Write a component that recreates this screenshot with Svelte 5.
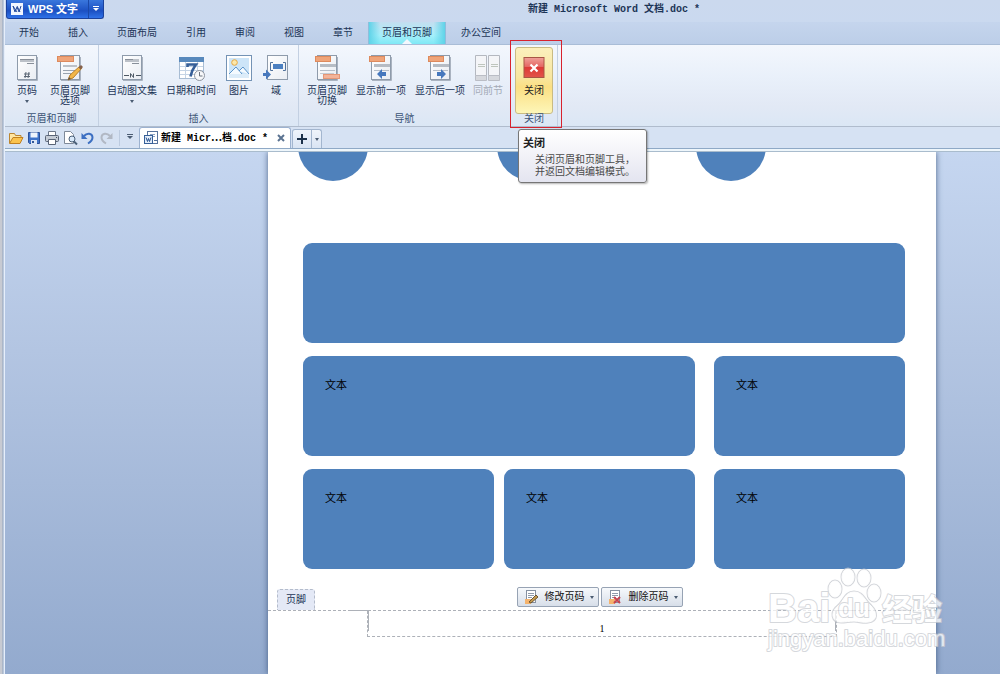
<script>
  const menuTabs = ['开始', '插入', '页面布局', '引用', '审阅', '视图', '章节', '页眉和页脚', '办公空间'];
  let activeTab = $state('页眉和页脚');

  const groups = [
    {
      title: '页眉和页脚',
      items: [
        { icon: 'number', lines: ['页码'], arrow: true },
        { icon: 'options', lines: ['页眉页脚', '选项'] }
      ]
    },
    {
      title: '插入',
      items: [
        { icon: 'autotext', lines: ['自动图文集'], arrow: true },
        { icon: 'date', lines: ['日期和时间'] },
        { icon: 'picture', lines: ['图片'] },
        { icon: 'field', lines: ['域'] }
      ]
    },
    {
      title: '导航',
      items: [
        { icon: 'switch', lines: ['页眉页脚', '切换'] },
        { icon: 'prev', lines: ['显示前一项'] },
        { icon: 'next', lines: ['显示后一项'] },
        { icon: 'same', lines: ['同前节'], disabled: true }
      ]
    },
    {
      title: '关闭',
      highlight: true,
      items: [{ icon: 'close', lines: ['关闭'] }]
    }
  ];

  const quickActions = [
    { id: 'open', label: '打开' },
    { id: 'save', label: '保存' },
    { id: 'print', label: '打印' },
    { id: 'preview', label: '打印预览' },
    { id: 'undo', label: '撤消' },
    { id: 'redo', label: '恢复' }
  ];
</script>

{#snippet sheet()}
  <rect x="4.5" y="1.5" width="19" height="24" fill="url(#paper)" stroke="#8e9bab" />
  <path d="M5 26.5h19.5V3" fill="none" stroke="#aab3c0" />
{/snippet}

{#snippet ribbonIcon(name)}
  <svg class="ribbon-icon" viewBox="0 0 28 28" aria-hidden="true">
    {#if name === 'number'}
      {@render sheet()}
      <path d="M7 5h14v3H7z" fill="#bcc1c8" />
      <path d="M7 5.500h14M14 9.500h7" stroke="#888f99" />
      <path d="M13 18l-1 6M16 18l-1 6M11 20h6M11 22.500h6" stroke="#5d6876" fill="none" />
    {:else if name === 'autotext'}
      {@render sheet()}
      <path d="M7 5h14v3H7z" fill="#bcc1c8" />
      <path d="M7 5.500h8M14 9.500h7" stroke="#888f99" />
      <path d="M6 21.500h5M18 21.500h5M12.500 23.500v-4l3 4v-4" stroke="#4d5864" fill="none" />
    {:else if name === 'date'}
      <rect x="2.500" y="3.500" width="24" height="21" fill="#fff" stroke="#a8bdd4" />
      <path d="M2 3h25v5H2z" fill="#5889bc" />
      <path d="M3 12.500h23M3 16.500h23M3 20.500h23M8.500 8v16M20.500 8v16" stroke="#c5d4e5" />
      <path d="M10.500 13v-2.500h8.500c-2.500 3.500-4.500 6-5.500 12" fill="none" stroke="#365f98" stroke-width="2.600" />
      <circle cx="22.500" cy="21.500" r="5" fill="#f7f8fa" stroke="#8c939e" />
      <path d="M22.500 18v4h3" fill="none" stroke="#6c7480" />
    {:else if name === 'picture'}
      <rect x="1.500" y="1.500" width="25" height="25" fill="#fff" stroke="#7493b5" />
      <rect x="4" y="4" width="20" height="20" fill="#cde5f8" />
      <circle cx="9.500" cy="8.500" r="2.800" fill="#fce7aa" stroke="#e5a845" />
      <path d="M4 20l7-7 6 7" fill="#f4faff" stroke="#5c94ca" />
      <path d="M14 17l4-4 6 7" fill="#f4faff" stroke="#5c94ca" />
      <path d="M4 20h20v4H4z" fill="#dcecf9" />
    {:else if name === 'field'}
      <rect x="5.500" y="1.500" width="20" height="24" fill="url(#paper)" stroke="#8e9bab" />
      <path d="M11 10h10v5H11z" fill="#4b7fc0" />
      <path d="M11 8.500H8.500v8H11M21 8.500h2.500v8H21" fill="none" stroke="#53739c" />
      <path d="M1 19h3v-3.500l5 5-5 5V22H1z" fill="#4778bd" />
    {:else if name === 'options'}
      {@render sheet()}
      <path d="M7 11h14v2H7z" fill="#bcc1c8" />
      <path d="M7 16.500h12M7 19.500h8" stroke="#9aa4b0" />
      <rect x="1.500" y="2.500" width="16" height="5" fill="#efa479" stroke="#dd8a5d" />
      <path d="M12 26l2-5L24 12l2 2-9 10z" fill="#f1b649" stroke="#ba7f27" />
      <path d="M12 26l1-3 2 2z" fill="#5c5148" />
      <path d="M22.500 13.500L25 11l2 2-2.500 2.500z" fill="#84614c" />
    {:else if name === 'same'}
      <path d="M1.500 1.500h11v20h-11zM14.500 1.500h11v20h-11z" fill="#f4f5f8" stroke="#b4b8c0" />
      <path d="M4 10.500h7M4 12.500h7M17 10.500h7M17 12.500h7" stroke="#bec5bd" />
      <path d="M1.500 21.500h11v5h-11zM14.500 21.500h11v5h-11z" fill="#d6d8dd" stroke="#babdc5" />
    {:else if name === 'close'}
      <rect x="4" y="3.500" width="20" height="20" fill="url(#closeRed)" stroke="#a85645" />
      <path d="M4.500 4h19v9h-19z" fill="#fff" opacity=".2" />
      <path d="M10.500 10.500l7 7M17.500 10.500l-7 7" stroke="#fff" stroke-width="2.200" />
    {:else}
      {@render sheet()}
      <path d="M7 10h16v3H7z" fill="#b6bcc4" />
      <path d="M7 16.500h15" stroke="#b6bec9" />
      <rect x="2.500" y="2.500" width="15" height="5" fill="#efa479" stroke="#dd8a5d" />
      {#if name === 'switch'}
        <path d="M7 19.500h14" stroke="#c5cbd3" />
        <rect x="10.500" y="20.500" width="16" height="4" fill="#f3b49a" stroke="#e59777" />
      {:else if name === 'prev'}
        <path d="M10 20l5-5v3h4v4h-4v3z" fill="#4678bd" />
      {:else}
        <path d="M20 20l-5-5v3h-4v4h4v3z" fill="#4678bd" />
      {/if}
    {/if}
  </svg>
{/snippet}

{#snippet quickIcon(name)}
  <svg class="quick-icon" viewBox="0 0 16 16" aria-hidden="true">
    {#if name === 'open'}
      <path d="M1.500 13V3.500h5l1 2H13V8" fill="#ffe6a2" stroke="#bb8632" />
      <path d="M1.500 13.500L5 7.500h10l-3 6z" fill="#fbc34d" stroke="#c08122" />
    {:else if name === 'save'}
      <path d="M2.500 2.500h11v11h-10l-1-1z" fill="#3e73c9" stroke="#2b5099" />
      <path d="M4.500 2.500h7v5h-7z" fill="#eef4fc" />
      <path d="M5 10h6v4H5z" fill="#dbe6f6" />
      <path d="M6 11h2v2H6z" fill="#315697" />
    {:else if name === 'print'}
      <path d="M4.500 6V1.500h7V6" fill="#fff" stroke="#6d788a" />
      <rect x="1.500" y="5.500" width="13" height="6" rx="1" fill="#c4cbd5" stroke="#596476" />
      <path d="M4.500 9.500h7v5h-7z" fill="#fff" stroke="#596476" />
      <path d="M12 7.500h1" stroke="#3e4a5c" />
    {:else if name === 'preview'}
      <path d="M2.500 1.500h6l3 3v9h-9z" fill="#fff" stroke="#7e8999" />
      <circle cx="10" cy="9" r="3" fill="#d8e9fa" stroke="#4b6078" />
      <path d="M12 11.500l3 3" stroke="#4b6078" stroke-width="2" />
    {:else if name === 'undo'}
      <path d="M4 6c3-3.500 8-3 8.500 1 .2 3-2 5-4.500 6.500" fill="none" stroke="#3c6fc2" stroke-width="2" />
      <path d="M1.500 3v6h6z" fill="#3c6fc2" />
    {:else if name === 'redo'}
      <path d="M12 6C9 2.500 4 3 3.500 7c-.2 3 2 5 4.500 6.500" fill="none" stroke="#b1b8c4" stroke-width="2" />
      <path d="M14.500 3v6h-6z" fill="#b1b8c4" />
    {:else}
      <rect x="4.500" y="1.500" width="10" height="12" fill="#fff" stroke="#57729c" />
      <path d="M7 4.500h5M7 6.500h5" stroke="#8ba1c0" />
      <rect x="1.500" y="5.500" width="8" height="8" fill="#e3edfa" stroke="#365f98" />
      <path d="M3 7.500l1.500 4 1-3 1 3 1.500-4" fill="none" stroke="#28528f" />
      <path d="M11 10.500h3" stroke="#57729c" />
    {/if}
  </svg>
{/snippet}

{#snippet pageIcon(kind)}
  <svg class="page-icon" viewBox="0 0 16 16" aria-hidden="true">
    <rect x="3.500" y="1.500" width="9" height="12" fill="#fff" stroke="#8691a1" />
    <path d="M5 4.500h6M5 6.500h6M5 8.500h4" stroke="#8f9aaa" />
    <path d="M2 10h6v5H2z" fill="#f4b36d" />
    {#if kind === 'edit'}
      <path d="M6 13l7-7 2 2-7 6z" fill="#c4994d" stroke="#6c5634" />
    {:else}
      <path d="M7 8l6 6M13 8l-6 6" stroke="#c44351" stroke-width="2" />
    {/if}
  </svg>
{/snippet}

{#snippet paw()}
  <ellipse cx="72" cy="22" rx="6" ry="8" />
  <ellipse cx="85" cy="10" rx="6" ry="8" />
  <ellipse cx="101" cy="11" rx="6" ry="8" />
  <ellipse cx="111" cy="26" rx="6" ry="8" />
  <path d="M91 25c-9 0-10 9-16 14-8 6-6 16 3 16 5 0 8-1 13-1s9 2 14 1c10-1 9-10 3-16-7-6-8-14-17-14z" />
{/snippet}

<svg class="defs" aria-hidden="true">
  <defs>
    <linearGradient id="paper" x2="1" y2="1">
      <stop offset="0" stop-color="#fff" />
      <stop offset="1" stop-color="#e9edf3" />
    </linearGradient>
    <linearGradient id="closeRed" x2="0" y2="1">
      <stop offset="0" stop-color="#ec8a80" />
      <stop offset=".5" stop-color="#dd3a36" />
      <stop offset="1" stop-color="#e2544a" />
    </linearGradient>
  </defs>
</svg>

<div class="app">
  <header class="title-bar">
    <button class="wps-button">
      <svg class="wps-logo" viewBox="0 0 12 12" aria-hidden="true">
        <rect width="12" height="12" fill="#f1f6ff" />
        <path d="M2 3l2 6 2-5 2 5 2-6M2 3l4 6M6 3l3 6" fill="none" stroke="#244a9c" />
      </svg>
      <span class="wps-name">WPS 文字</span>
      <span class="wps-drop"><span class="arrow light bar"></span></span>
    </button>
    <h1>新建 Microsoft Word 文档.doc *</h1>
  </header>

  <nav class="menu">
    {#each menuTabs as tab}
      <button class:active={tab === activeTab} onclick={() => (activeTab = tab)}>{tab}</button>
    {/each}
  </nav>

  <section class="ribbon">
    {#each groups as group}
      <div class="group" class:highlight={group.highlight}>
        <div class="group-items">
          {#each group.items as item}
            <button class="tool" disabled={item.disabled}>
              {@render ribbonIcon(item.icon)}
              {#each item.lines as line}
                <span>{line}</span>
              {/each}
              {#if item.arrow}
                <i class="arrow"></i>
              {/if}
            </button>
          {/each}
        </div>
        <div class="group-title">{group.title}</div>
        {#if group.highlight}
          <div class="tooltip" role="tooltip">
            <strong>关闭</strong>
            <p>关闭页眉和页脚工具，<br />并返回文档编辑模式。</p>
          </div>
        {/if}
      </div>
    {/each}
  </section>

  <div class="doc-bar">
    <div class="quick">
      {#each quickActions as action}
        <button aria-label={action.label}>{@render quickIcon(action.id)}</button>
      {/each}
      <button class="more" aria-label="更多"><span class="arrow bar"></span></button>
    </div>
    <div class="doc-tab">
      {@render quickIcon('doc')}
      <div class="doc-name">新建 Micr<span class="dots">⋯</span>档.doc *</div>
      <button aria-label="关闭文档">
        <svg viewBox="0 0 8 8" aria-hidden="true"><path d="M1 1l6 6M7 1L1 7" stroke="#5b7391" stroke-width="2" /></svg>
      </button>
    </div>
    <div class="new-tab">
      <button class="plus" aria-label="新建">
        <svg viewBox="0 0 10 10" aria-hidden="true"><path d="M5 0v10M0 5h10" stroke="#1c3149" stroke-width="2" /></svg>
      </button>
      <button class="plus-drop" aria-label="新建选项"><span class="arrow"></span></button>
    </div>
  </div>

  <main class="workspace">
    <article class="page">
      <div class="circles">
        <span class="circle"></span>
        <span class="circle"></span>
        <span class="circle"></span>
      </div>

      <div class="boxes">
        <div class="box wide"></div>
        <div class="box">文本</div>
        <div class="box">文本</div>
        <div class="pair">
          <div class="box">文本</div>
          <div class="box">文本</div>
        </div>
        <div class="box">文本</div>
      </div>

      <div class="footer-bar">
        <span class="footer-label">页脚</span>
        <div class="footer-buttons">
          <button>{@render pageIcon('edit')}<span>修改页码</span><i class="arrow"></i></button>
          <button>{@render pageIcon('delete')}<span>删除页码</span><i class="arrow"></i></button>
        </div>
      </div>
      <div class="footer-area">
        <div class="footer-frame">1</div>
      </div>
    </article>

    <svg class="watermark" viewBox="0 0 190 90" aria-hidden="true">
      <g class="mark-outline">{@render paw()}</g>
      <g class="mark-fill">{@render paw()}</g>
      <g class="mark-text">
        <text class="mark-name" x="5" y="55">Bai</text>
        <text class="mark-du" x="75" y="50">du</text>
        <text class="mark-cn" x="119" y="53">经验</text>
        <text class="mark-url" x="5" y="79">jingyan.baidu.com</text>
      </g>
    </svg>
  </main>
</div>

<style>
  :global(body) {
    margin: 0;
    background: #9aafd2;
  }

  .app {
    box-sizing: border-box;
    min-height: 100vh;
    display: flex;
    flex-direction: column;
    padding-left: 5px;
    background: linear-gradient(to right, #c7cad2 2px, #8fa3bf 3px, #e6eefa 4px, #e6eefa 5px, transparent 5px);
    color: #1d3557;
    font-family: "Liberation Sans", "Noto Sans CJK SC", sans-serif;
    font-size: 10px;
    line-height: 10px;
  }

  .defs {
    position: absolute;
    width: 0;
    height: 0;
  }

  button {
    margin: 0;
    padding: 0;
    border: none;
    background: none;
    color: inherit;
    font: inherit;
    cursor: pointer;
  }

  .arrow {
    display: block;
    width: 0;
    height: 0;
    border: 2px solid transparent;
    border-top: 3px solid #4b5c72;
    border-bottom: none;
  }

  .arrow.light {
    border-top-color: #fff;
  }

  .arrow.bar {
    border-width: 3px 3px 0;
    position: relative;
  }

  .arrow.bar::before {
    content: "";
    position: absolute;
    left: -3px;
    top: -5px;
    width: 6px;
    height: 1px;
    background: #4b5c72;
  }

  .arrow.light::before {
    background: #fff;
  }

  .title-bar {
    display: flex;
    align-items: flex-start;
    height: 22px;
    padding-left: 1px;
    background: linear-gradient(#cbd9ee, #cad9ef);
  }

  .wps-button {
    display: flex;
    align-items: center;
    box-sizing: border-box;
    height: 19px;
    width: 98px;
    padding-left: 4px;
    border: 1px solid #1b429d;
    border-top: none;
    border-radius: 0 0 3px 3px;
    background: linear-gradient(#3a77dd, #1c50c2 60%, #2f72e8);
    color: #fff;
    font-size: 11px;
    font-weight: bold;
  }

  .wps-logo {
    width: 12px;
    height: 12px;
  }

  .wps-name {
    flex: 1;
    padding-left: 5px;
    text-align: left;
  }

  .wps-drop {
    display: flex;
    align-items: center;
    justify-content: center;
    width: 14px;
    height: 18px;
    border-left: 1px solid #1a48a8;
  }

  .title-bar h1 {
    flex: 1;
    margin: 0;
    padding: 4px 0 0 124px;
    text-align: center;
    font-family: "Liberation Mono", "Noto Sans CJK SC", monospace;
    font-size: 10px;
    line-height: 12px;
  }

  .menu {
    display: flex;
    gap: 1px;
    height: 22px;
    border-bottom: 1px solid #a9bdd7;
    background: linear-gradient(#c5d5ed, #bccee8);
  }

  .menu button {
    padding: 0 14px;
  }

  .menu .active {
    position: relative;
    border-left: 1px solid #8fbddc;
    border-right: 1px solid #8fbddc;
    padding: 0 13px;
    background: linear-gradient(to right, #5fd3e8, transparent 15%, transparent 85%, #5fd3e8), linear-gradient(#c4def0, #a5effa 60%, #7fe9f6);
  }

  .menu .active::after {
    content: "";
    position: absolute;
    left: 50%;
    bottom: 0;
    margin-left: -5px;
    border: 5px solid transparent;
    border-top: none;
    border-bottom-color: #f3f7fd;
  }

  .ribbon {
    display: flex;
    height: 81px;
    border-bottom: 1px solid #b0bccd;
    background: linear-gradient(#f3f7fd, #e9f0fa 40%, #e2e9f5 75%, #dbe7f5);
  }

  .group {
    position: relative;
    padding: 2px 4px 0;
    border-right: 1px solid #c3d0e2;
    box-sizing: border-box;
  }

  .group-items {
    display: flex;
    gap: 1px;
  }

  .tool {
    display: flex;
    flex-direction: column;
    align-items: center;
    box-sizing: border-box;
    min-width: 36px;
    height: 67px;
    padding: 7px 4px 0;
    white-space: nowrap;
  }

  .tool:disabled {
    padding: 7px 3px 0;
    color: #a3aab6;
  }

  .ribbon-icon {
    width: 28px;
    height: 28px;
    margin-bottom: 4px;
  }

  .tool .arrow {
    margin-top: 4px;
  }

  .group-title {
    text-align: center;
    color: #3c5475;
  }

  .highlight .tool {
    width: 38px;
    padding-top: 6px;
    border: 1px solid #c9bb83;
    border-radius: 3px;
    background: linear-gradient(#fbf0bd, #f8e6a0 45%, #fbdf83 60%, #fdf6b8);
    color: #222;
  }

  .highlight::after {
    content: "";
    position: absolute;
    z-index: 1;
    top: -5px;
    left: -1px;
    right: -5px;
    bottom: -2px;
    border: 1px solid #d8222e;
    pointer-events: none;
  }

  .tooltip {
    position: absolute;
    z-index: 2;
    left: 7px;
    top: 84px;
    box-sizing: border-box;
    width: 129px;
    padding: 7px 4px 4px;
    border: 1px solid #767676;
    border-radius: 3px;
    background: linear-gradient(#fff, #e4e5f0);
    box-shadow: 1px 1px 2px rgba(0, 0, 0, 0.3);
    color: #4a4a4a;
    white-space: nowrap;
  }

  .tooltip strong {
    display: block;
    color: #222;
    font-size: 11px;
    line-height: 12px;
  }

  .tooltip p {
    margin: 5px 0 0;
    padding-left: 12px;
    line-height: 12px;
  }

  .doc-bar {
    display: flex;
    height: 21px;
    border-bottom: 1px solid #8fa9c6;
    background: #d6e2f3;
    box-shadow: 0 2px 0 #eef6fb, 0 3px 0 #a9bccd;
    position: relative;
  }

  .quick {
    display: flex;
    align-items: center;
    gap: 2px;
    padding-left: 3px;
  }

  .quick button {
    height: 16px;
  }

  .quick-icon {
    display: block;
    flex: none;
    width: 16px;
    height: 16px;
  }

  .quick .more {
    display: flex;
    align-items: center;
    justify-content: center;
    width: 20px;
    margin-left: 3px;
    border-left: 1px solid #bccbe0;
  }

  .doc-tab {
    display: flex;
    align-items: center;
    box-sizing: border-box;
    height: 21px;
    padding: 0 5px 0 3px;
    border: 1px solid #9cb2d0;
    border-bottom: none;
    border-radius: 3px 3px 0 0;
    background: #fff;
    color: #000;
    font-family: "Liberation Mono", "Noto Sans CJK SC", monospace;
    font-weight: bold;
    white-space: nowrap;
  }

  .doc-name {
    width: 116px;
    padding-left: 2px;
  }

  .dots {
    font-family: "Noto Sans CJK SC", sans-serif;
  }

  .doc-tab button,
  .doc-tab button svg {
    display: block;
    width: 8px;
    height: 8px;
  }

  .new-tab {
    display: flex;
    box-sizing: border-box;
    height: 19px;
    margin: 2px 0 0 1px;
    border: 1px solid #a3b6cf;
    border-bottom: none;
    border-radius: 3px 3px 0 0;
    background: linear-gradient(#eff4fb, #d9e4f3);
  }

  .new-tab button {
    display: flex;
    align-items: center;
    justify-content: center;
  }

  .plus {
    width: 18px;
  }

  .plus svg {
    width: 10px;
    height: 10px;
  }

  .new-tab .plus-drop {
    width: 10px;
    border-left: 1px solid #a3b6cf;
  }

  .workspace {
    position: relative;
    display: flex;
    flex: 1;
    margin-top: 3px;
    padding: 0 64px 0 263px;
    background: linear-gradient(#c5d6f0, #b3c5e2 38%, #93aace);
  }

  .page {
    flex: 1;
    background: #fff;
    box-shadow: 0 0 6px rgba(50, 75, 115, 0.8);
    clip-path: inset(0 -8px);
  }

  .circles {
    display: flex;
    align-items: flex-end;
    gap: 129px;
    height: 29px;
    overflow: hidden;
    padding-left: 30px;
  }

  .circle {
    flex: none;
    width: 70px;
    height: 70px;
    border-radius: 50%;
    background: #4f81bb;
  }

  .boxes {
    display: grid;
    grid-template-columns: 392fr 191fr;
    gap: 13px 19px;
    margin: 62px 31px 0 35px;
    color: #000;
    font-size: 11px;
    line-height: 12px;
  }

  .box {
    box-sizing: border-box;
    height: 100px;
    padding: 23px 22px;
    border-radius: 9px;
    background: #4f81bb;
  }

  .wide {
    grid-column: 1 / -1;
  }

  .pair {
    display: grid;
    grid-template-columns: 1fr 1fr;
    gap: 10px;
  }

  .footer-bar {
    display: grid;
    grid-template-columns: 1fr auto 1fr;
    align-items: end;
    height: 41px;
    padding: 0 14px 0 9px;
  }

  .footer-label {
    justify-self: start;
    padding: 5px 8px;
    border: 1px dashed #b4bccb;
    border-bottom: none;
    border-radius: 3px 3px 0 0;
    background: #e4e9f6;
  }

  .footer-buttons {
    display: flex;
    gap: 2px;
    padding-bottom: 3px;
  }

  .footer-buttons button {
    display: flex;
    align-items: center;
    box-sizing: border-box;
    width: 82px;
    height: 20px;
    padding: 0 4px 0 5px;
    border: 1px solid #97a3b4;
    border-radius: 2px;
    background: linear-gradient(#f7f9fc, #d7dee9);
    color: #111;
    white-space: nowrap;
  }

  .footer-buttons span {
    flex: 1;
    padding-left: 6px;
    text-align: left;
  }

  .page-icon {
    width: 16px;
    height: 16px;
  }

  .footer-area {
    border-top: 1px dashed #adb1b8;
  }

  .footer-frame {
    position: relative;
    box-sizing: border-box;
    height: 26px;
    margin: 0 99px;
    padding-top: 13px;
    border: 1px dashed #adb1b8;
    border-top: none;
    text-align: center;
    color: #000;
    font-family: "Liberation Serif", serif;
  }

  /* margin corner marks */
  .footer-frame::before,
  .footer-frame::after {
    content: "";
    position: absolute;
    top: -1px;
    width: 18px;
    height: 20px;
    border-top: 1px solid #adb1b8;
  }

  .footer-frame::before {
    right: 100%;
    margin-right: -1px;
    border-right: 1px solid #adb1b8;
  }

  .footer-frame::after {
    left: 100%;
    margin-left: -1px;
    border-left: 1px solid #adb1b8;
  }

  .watermark {
    position: absolute;
    right: 47px;
    bottom: 17px;
    width: 190px;
    height: 90px;
    opacity: 0.75;
    pointer-events: none;
    font-family: "Liberation Sans", "Noto Sans CJK SC", sans-serif;
  }

  .mark-outline {
    fill: none;
    stroke: #c8cbd1;
    stroke-width: 3px;
  }

  .mark-fill {
    fill: #fff;
    stroke: #fff;
    stroke-width: 1px;
  }

  .mark-text {
    fill: #fff;
    stroke: #c8cbd1;
    stroke-width: 2px;
    stroke-linejoin: round;
    paint-order: stroke;
  }

  .mark-name {
    font-size: 40px;
    font-weight: bold;
  }

  .mark-du {
    font-size: 26px;
    font-weight: bold;
  }

  .mark-cn {
    font-size: 30px;
    font-weight: bold;
  }

  .mark-url {
    font-size: 22px;
  }
</style>
